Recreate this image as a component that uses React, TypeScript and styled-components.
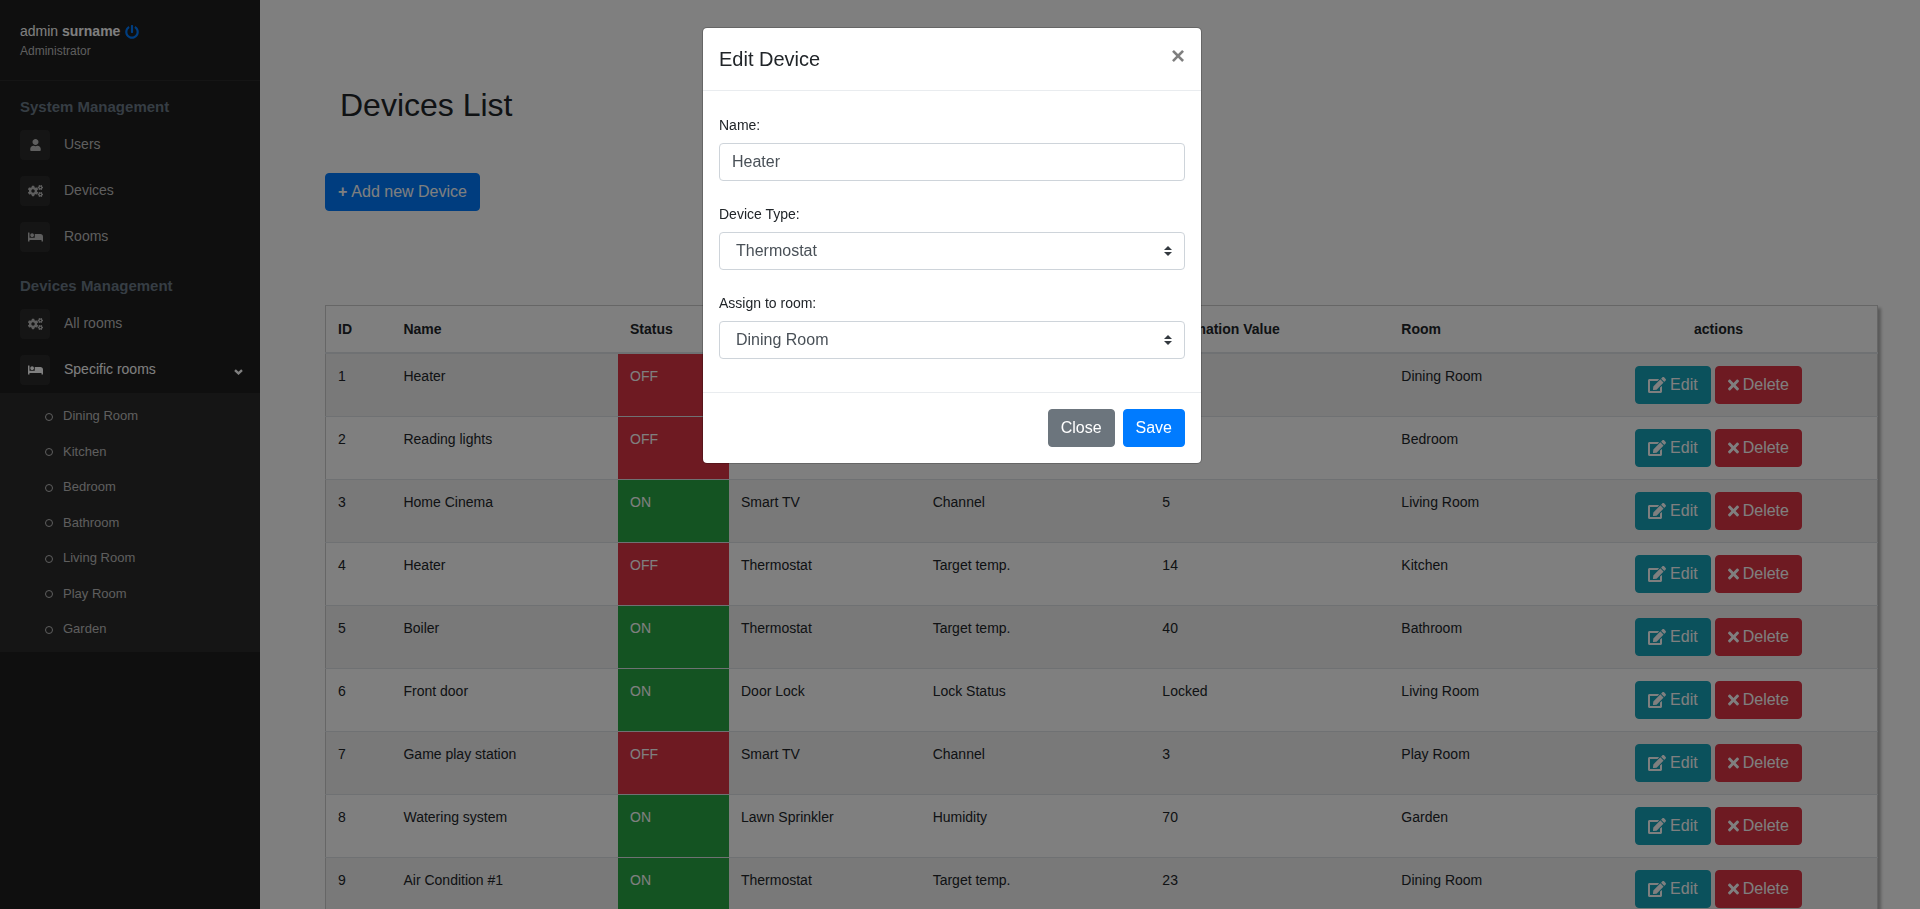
import React from "react";
import styled, { createGlobalStyle } from "styled-components";
import { FaBed, FaCogs, FaEdit, FaPowerOff, FaTimes, FaUser } from "react-icons/fa";

const GlobalStyle = createGlobalStyle`
  *, *::before, *::after { box-sizing: border-box; }
  body {
    margin: 0;
    background: #fff;
    color: #212529;
    font-family: Arial, "Liberation Sans", sans-serif;
    font-size: 14px;
    line-height: 1.5;
  }
  button, input, select { font-family: inherit; }
`;

const Page = styled.div`
  display: flex;
  height: 100vh;
  overflow: hidden;
`;

const Glyph = styled.span<{ $width: number }>`
  display: flex;
  flex: none;

  svg {
    width: ${(p) => p.$width}px;
    height: 1em;
  }
`;

/* ---------- Sidebar ---------- */

const Sidebar = styled.aside`
  flex: 0 0 260px;
  background: #1e1e1e;
  color: #bdbdbd;
`;

const Profile = styled.header`
  display: flex;
  flex-direction: column;
  padding: 21px 20px 20px;
  border-bottom: 1px solid #2b2b2b;
`;

const UserName = styled.span`
  display: flex;
  align-items: center;
  gap: 5px;
  color: #fff;
`;

const PowerLink = styled.a`
  display: flex;
  color: #007bff;
`;

const Role = styled.span`
  font-size: 12px;
`;

const MenuTitle = styled.h2`
  margin: 0;
  padding: 15px 20px 5px;
  color: #6c7b88;
  font-size: 15px;
  font-weight: 700;
  line-height: 21px;
`;

const MenuList = styled.ul`
  margin: 0;
  padding: 0;
  list-style: none;
`;

const MenuLink = styled.a<{ $active?: boolean }>`
  display: flex;
  align-items: flex-start;
  padding: 8px 17px 8px 20px;
  color: ${(p) => (p.$active ? "#fff" : "#bdbdbd")};
  line-height: 28px;
  text-decoration: none;
`;

const MenuIcon = styled.span`
  display: flex;
  align-items: center;
  justify-content: center;
  width: 30px;
  height: 30px;
  margin-right: 14px;
  border-radius: 4px;
  background: #2b2b2b;
  font-size: 12px;
`;

const MenuArrow = styled.svg`
  align-self: center;
  width: 9px;
  height: 6px;
  margin-top: 4px;
  margin-left: auto;
`;

const SubMenu = styled(MenuList)`
  padding: 5px 0;
  background: #2b2b2b;
`;

const SubLink = styled.a`
  display: flex;
  align-items: center;
  gap: 10px;
  padding: 8px 45px;
  color: #bdbdbd;
  font-size: 13px;
  text-decoration: none;

  &::before {
    content: "";
    width: 8px;
    height: 8px;
    margin-top: 2px;
    border: 1px solid currentColor;
    border-radius: 50%;
  }
`;

/* ---------- Main content ---------- */

const Main = styled.main`
  flex: 1;
  min-width: 0;
  padding: 81px 42px 0 65px;
`;

const PageTitle = styled.h1`
  margin: 0 0 44px;
  padding-left: 15px;
  font-size: 32px;
  font-weight: 400;
  line-height: 48px;
`;

const buttonColors = {
  primary: "#007bff",
  secondary: "#6c757d",
  info: "#17a2b8",
  danger: "#dc3545",
};

const Button = styled.button<{ $kind: keyof typeof buttonColors }>`
  display: inline-flex;
  align-items: center;
  gap: 4px;
  padding: 6px 12px;
  border: 1px solid ${(p) => buttonColors[p.$kind]};
  border-radius: 4px;
  background: ${(p) => buttonColors[p.$kind]};
  color: #fff;
  font-size: 16px;
  line-height: 24px;
  cursor: pointer;
`;

const DeviceTable = styled.table`
  width: 100%;
  margin-top: 94px;
  border-collapse: collapse;
  table-layout: fixed;
  border: 1px solid #ccc;
  box-shadow: 3px 3px 3px rgba(0, 0, 0, 0.3);
`;

const Col = styled.col<{ $share: number }>`
  width: ${(p) => p.$share}%;
`;

const HeadCell = styled.th<{ $center?: boolean }>`
  padding: 13px 12px 12px;
  border-bottom: 2px solid #dee2e6;
  text-align: ${(p) => (p.$center ? "center" : "left")};
  line-height: 21px;
`;

const Row = styled.tr`
  &:nth-child(odd) {
    background: #f2f2f2;
  }
`;

const Cell = styled.td`
  padding: 12px;
  border-top: 1px solid #dee2e6;
  vertical-align: top;
`;

const StatusCell = styled(Cell)<{ $on: boolean }>`
  background: ${(p) => (p.$on ? "#28a745" : "#dc3545")};
  color: #fff;
`;

const Actions = styled.div`
  display: flex;
  justify-content: center;
  gap: 4px;
`;

/* ---------- Modal ---------- */

const Backdrop = styled.div`
  position: fixed;
  inset: 0;
  padding: 27px 16px 27px 0;
  background: rgba(0, 0, 0, 0.5);
`;

const Dialog = styled.form`
  width: 100%;
  max-width: 500px;
  margin: 0 auto;
  border: 1px solid rgba(0, 0, 0, 0.2);
  border-radius: 5px;
  background: #fff;
  background-clip: padding-box;
`;

const DialogHeader = styled.header`
  display: flex;
  align-items: flex-start;
  justify-content: space-between;
  padding: 16px;
  border-bottom: 1px solid #e9ecef;
`;

const DialogTitle = styled.h2`
  margin: 0;
  font-size: 20px;
  font-weight: 400;
  line-height: 30px;
`;

const CloseIcon = styled.button`
  padding: 0;
  border: 0;
  background: none;
  color: #000;
  font-size: 24px;
  font-weight: 700;
  line-height: 24px;
  opacity: 0.5;
  cursor: pointer;
`;

const DialogBody = styled.div`
  display: flex;
  flex-direction: column;
  gap: 23px;
  padding: 24px 16px 33px;
`;

const Field = styled.div`
  display: flex;
  flex-direction: column;
  gap: 7px;
`;

const TextInput = styled.input`
  width: 100%;
  height: 38px;
  padding: 6px 12px;
  border: 1px solid #ced4da;
  border-radius: 4px;
  background: #fff;
  color: #495057;
  font-size: 16px;
  line-height: 24px;
`;

const SelectBox = styled.div`
  display: grid;
  align-items: center;

  > * {
    grid-area: 1 / 1;
  }

  > svg {
    justify-self: end;
    width: 8px;
    height: 10px;
    margin-right: 13px;
    pointer-events: none;
  }
`;

const Select = styled.select`
  width: 100%;
  height: 38px;
  padding: 6px 28px 6px 16px;
  border: 1px solid #ced4da;
  border-radius: 4px;
  background: #fff;
  color: #495057;
  font-size: 16px;
  line-height: 24px;
  appearance: none;
`;

const DialogFooter = styled.footer`
  display: flex;
  justify-content: flex-end;
  gap: 8px;
  padding: 16px;
  border-top: 1px solid #e9ecef;
`;

/* ---------- Data ---------- */

const usersIcon = <Glyph $width={11}><FaUser /></Glyph>;
const cogsIcon = <Glyph $width={15}><FaCogs /></Glyph>;
const bedIcon = <Glyph $width={15}><FaBed /></Glyph>;

const systemMenu = [
  { label: "Users", icon: usersIcon },
  { label: "Devices", icon: cogsIcon },
  { label: "Rooms", icon: bedIcon },
];

const rooms = [
  "Dining Room",
  "Kitchen",
  "Bedroom",
  "Bathroom",
  "Living Room",
  "Play Room",
  "Garden",
];

const deviceTypes = ["Thermostat", "Smart TV", "Door Lock", "Lawn Sprinkler"];

const columnShares = [4.25, 14.6, 7.15, 12.35, 14.8, 15.4, 11, 20.45];

type Device = {
  name: string;
  on: boolean;
  type: string;
  info: string;
  value: string;
  room: string;
};

const devices: Device[] = [
  { name: "Heater", on: false, type: "Thermostat", info: "Target temp.", value: "22", room: "Dining Room" },
  { name: "Reading lights", on: false, type: "Lights", info: "Brightness", value: "50", room: "Bedroom" },
  { name: "Home Cinema", on: true, type: "Smart TV", info: "Channel", value: "5", room: "Living Room" },
  { name: "Heater", on: false, type: "Thermostat", info: "Target temp.", value: "14", room: "Kitchen" },
  { name: "Boiler", on: true, type: "Thermostat", info: "Target temp.", value: "40", room: "Bathroom" },
  { name: "Front door", on: true, type: "Door Lock", info: "Lock Status", value: "Locked", room: "Living Room" },
  { name: "Game play station", on: false, type: "Smart TV", info: "Channel", value: "3", room: "Play Room" },
  { name: "Watering system", on: true, type: "Lawn Sprinkler", info: "Humidity", value: "70", room: "Garden" },
  { name: "Air Condition #1", on: true, type: "Thermostat", info: "Target temp.", value: "23", room: "Dining Room" },
];

function SelectField({ id, label, options }: { id: string; label: string; options: string[] }) {
  return (
    <Field>
      <label htmlFor={id}>{label}</label>
      <SelectBox>
        <Select id={id} defaultValue={options[0]}>
          {options.map((option) => (
            <option key={option}>{option}</option>
          ))}
        </Select>
        <svg viewBox="0 0 4 5" aria-hidden="true">
          <path fill="#343a40" d="M2 0L0 2h4zm0 5L0 3h4z" />
        </svg>
      </SelectBox>
    </Field>
  );
}

function EditDialog() {
  return (
    <Backdrop>
      <Dialog role="dialog" aria-labelledby="dialog-title" onSubmit={(e) => e.preventDefault()}>
        <DialogHeader>
          <DialogTitle id="dialog-title">Edit Device</DialogTitle>
          <CloseIcon type="button" aria-label="Close">×</CloseIcon>
        </DialogHeader>
        <DialogBody>
          <Field>
            <label htmlFor="device-name">Name:</label>
            <TextInput id="device-name" type="text" defaultValue="Heater" />
          </Field>
          <SelectField id="device-type" label="Device Type:" options={deviceTypes} />
          <SelectField id="device-room" label="Assign to room:" options={rooms} />
        </DialogBody>
        <DialogFooter>
          <Button type="button" $kind="secondary">Close</Button>
          <Button type="submit" $kind="primary">Save</Button>
        </DialogFooter>
      </Dialog>
    </Backdrop>
  );
}

function SideNav() {
  return (
    <Sidebar>
      <Profile>
        <UserName>
          <span>admin <strong>surname</strong></span>
          <PowerLink href="#" aria-label="Log out">
            <Glyph $width={14}><FaPowerOff /></Glyph>
          </PowerLink>
        </UserName>
        <Role>Administrator</Role>
      </Profile>
      <nav>
        <MenuTitle>System Management</MenuTitle>
        <MenuList>
          {systemMenu.map((item) => (
            <li key={item.label}>
              <MenuLink href="#">
                <MenuIcon>{item.icon}</MenuIcon>
                {item.label}
              </MenuLink>
            </li>
          ))}
        </MenuList>
        <MenuTitle>Devices Management</MenuTitle>
        <MenuList>
          <li>
            <MenuLink href="#"><MenuIcon>{cogsIcon}</MenuIcon>All rooms</MenuLink>
          </li>
          <li>
            <MenuLink href="#" $active>
              <MenuIcon>{bedIcon}</MenuIcon>
              Specific rooms
              <MenuArrow viewBox="0 0 9 6" aria-hidden="true">
                <path d="M1 1.2L4.5 4.4L8 1.2" fill="none" stroke="currentColor" strokeWidth="2.4" />
              </MenuArrow>
            </MenuLink>
            <SubMenu>
              {rooms.map((room) => (
                <li key={room}><SubLink href="#">{room}</SubLink></li>
              ))}
            </SubMenu>
          </li>
        </MenuList>
      </nav>
    </Sidebar>
  );
}

export default function App() {
  return (
    <>
      <GlobalStyle />
      <Page>
        <SideNav />
        <Main>
          <PageTitle>Devices List</PageTitle>
          <Button type="button" $kind="primary"><b>+</b>Add new Device</Button>
          <DeviceTable>
            <colgroup>
              {columnShares.map((share, i) => (
                <Col key={i} $share={share} />
              ))}
            </colgroup>
            <thead>
              <tr>
                <HeadCell>ID</HeadCell>
                <HeadCell>Name</HeadCell>
                <HeadCell>Status</HeadCell>
                <HeadCell>Type</HeadCell>
                <HeadCell>Information</HeadCell>
                <HeadCell>Information Value</HeadCell>
                <HeadCell>Room</HeadCell>
                <HeadCell $center>actions</HeadCell>
              </tr>
            </thead>
            <tbody>
              {devices.map((device, i) => (
                <Row key={i}>
                  <Cell>{i + 1}</Cell>
                  <Cell>{device.name}</Cell>
                  <StatusCell $on={device.on}>{device.on ? "ON" : "OFF"}</StatusCell>
                  <Cell>{device.type}</Cell>
                  <Cell>{device.info}</Cell>
                  <Cell>{device.value}</Cell>
                  <Cell>{device.room}</Cell>
                  <Cell>
                    <Actions>
                      <Button type="button" $kind="info">
                        <Glyph $width={18}><FaEdit /></Glyph>Edit
                      </Button>
                      <Button type="button" $kind="danger">
                        <Glyph $width={11}><FaTimes /></Glyph>Delete
                      </Button>
                    </Actions>
                  </Cell>
                </Row>
              ))}
            </tbody>
          </DeviceTable>
        </Main>
      </Page>
      <EditDialog />
    </>
  );
}
